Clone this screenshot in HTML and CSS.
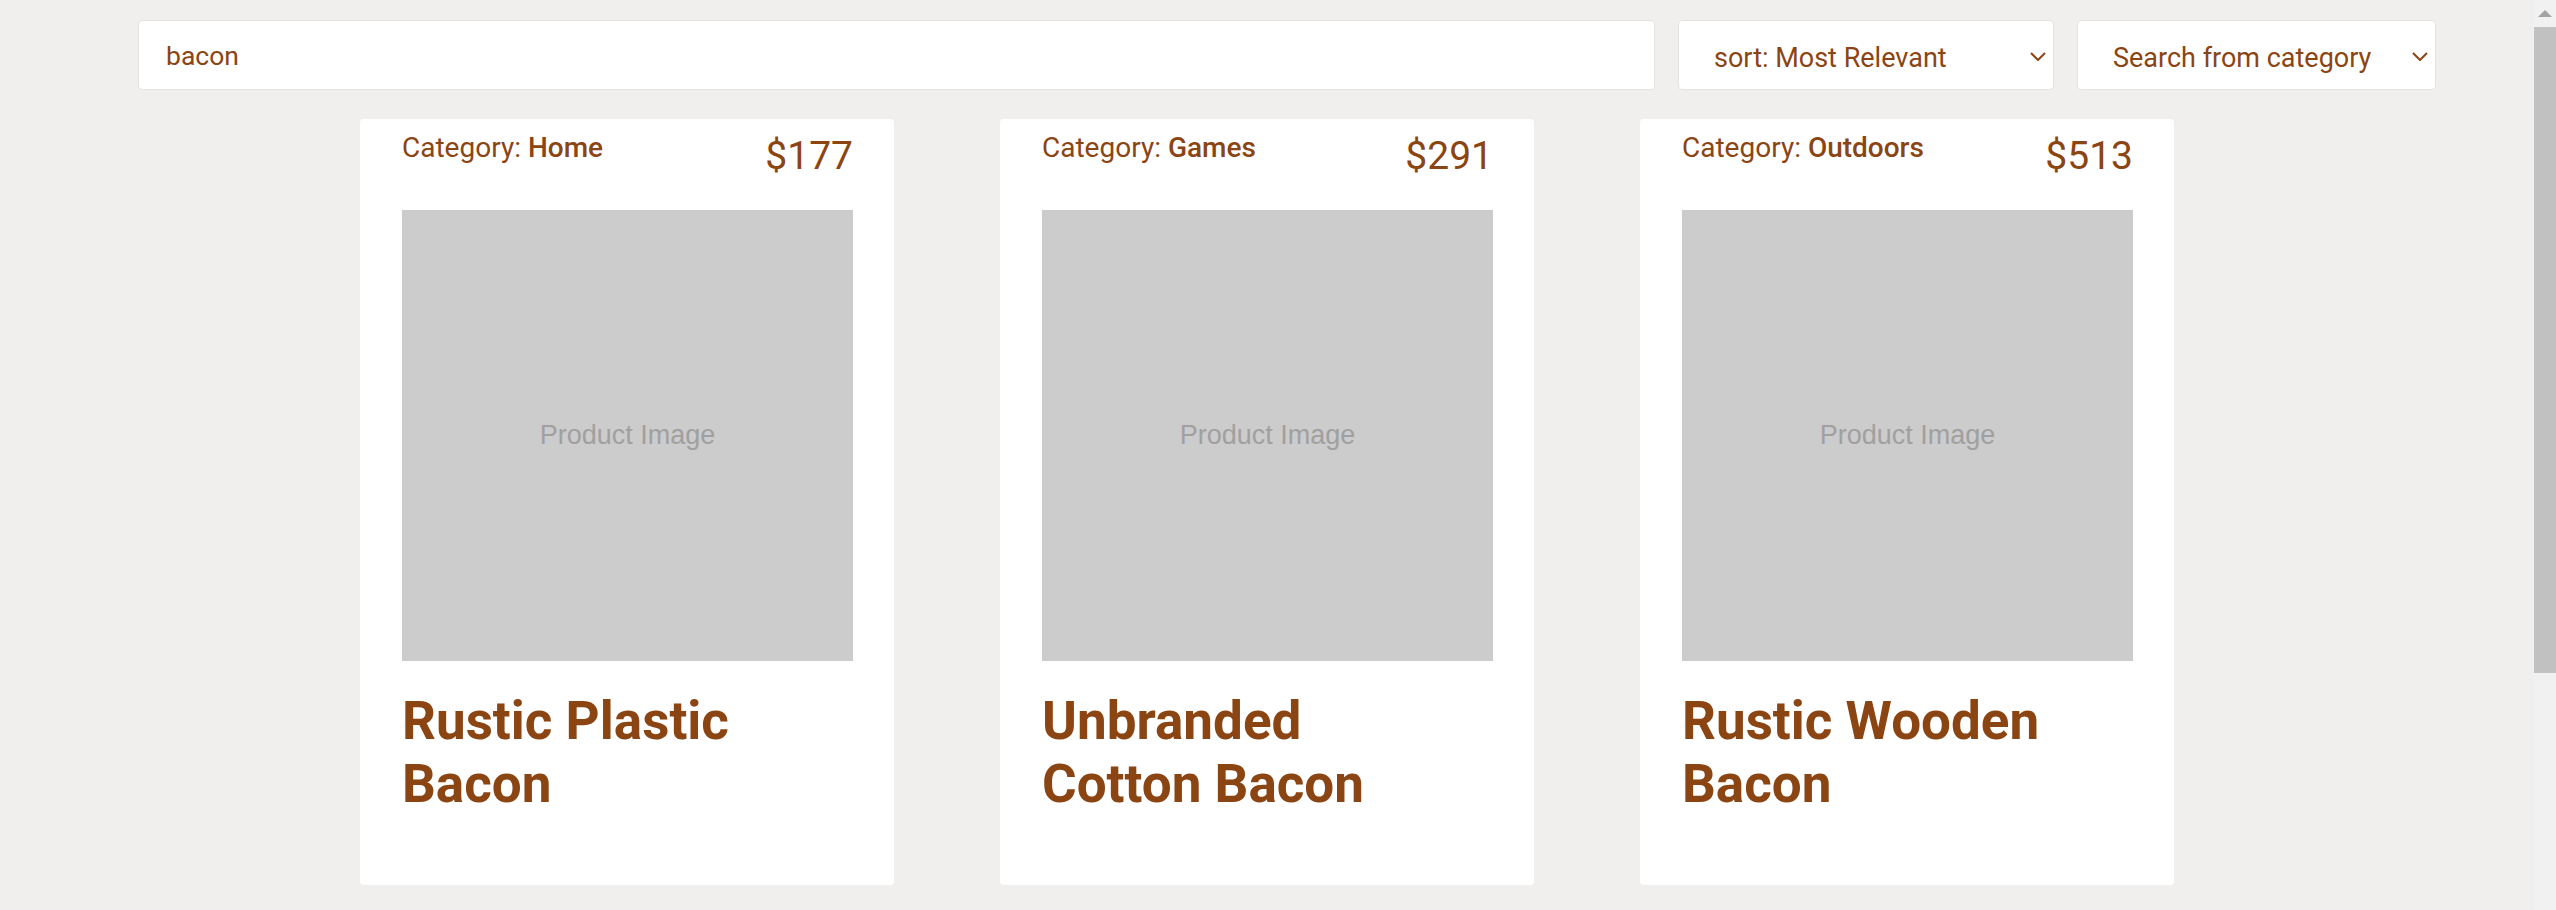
FILE: index.html
```html
<!DOCTYPE html>
<html lang="en">
<head>
<meta charset="utf-8">
<title>Products</title>
<link rel="stylesheet" href="styles.css">
</head>
<body>
<div class="page">
  <header class="toolbar">
    <input class="search" type="text" value="bacon">
    <button class="dropdown sort" type="button">
      <span>sort: Most Relevant</span>
      <svg class="chev" viewBox="0 0 16 9" width="16" height="9"><path d="M1 1 L8 8 L15 1"/></svg>
    </button>
    <button class="dropdown cat" type="button">
      <span>Search from category</span>
      <svg class="chev" viewBox="0 0 16 9" width="16" height="9"><path d="M1 1 L8 8 L15 1"/></svg>
    </button>
  </header>
  <main class="grid">
    <article class="card">
      <div class="card-head">
        <p class="category">Category: <b>Home</b></p>
        <p class="price">$177</p>
      </div>
      <div class="image">Product Image</div>
      <h2 class="title">Rustic Plastic Bacon</h2>
    </article>
    <article class="card">
      <div class="card-head">
        <p class="category">Category: <b>Games</b></p>
        <p class="price">$291</p>
      </div>
      <div class="image">Product Image</div>
      <h2 class="title">Unbranded Cotton Bacon</h2>
    </article>
    <article class="card">
      <div class="card-head">
        <p class="category">Category: <b>Outdoors</b></p>
        <p class="price">$513</p>
      </div>
      <div class="image">Product Image</div>
      <h2 class="title">Rustic Wooden Bacon</h2>
    </article>
  </main>
</div>
<div class="scrollbar" aria-hidden="true">
  <div class="sb-button">
    <svg width="14" height="7" viewBox="0 0 14 7"><path d="M0 7 L7 0 L14 7 Z"/></svg>
  </div>
  <div class="sb-thumb"></div>
</div>
</body>
</html>
```
FILE: styles.css
```css
html {
  background: #f0efee;
  overflow: hidden;
}
body {
  margin: 0;
  height: 910px;
  display: flex;
  overflow: hidden;
  background: #f0efee;
  color: #8b4513;
  font-family: Roboto, "Noto Sans", sans-serif;
}
.page {
  flex: 1;
  min-width: 0;
}

/* scrollbar column */
.scrollbar {
  width: 22px;
  flex: none;
  display: flex;
  flex-direction: column;
  background: #f1f1f1;
}
.sb-button {
  height: 27px;
  display: flex;
  justify-content: center;
  align-items: flex-start;
  padding-top: 10px;
  box-sizing: border-box;
}
.sb-button svg {
  fill: #a3a3a3;
}
.sb-thumb {
  height: 646px;
  background: #c1c1c1;
}

/* toolbar */
.toolbar {
  display: flex;
  gap: 23px;
  padding: 20px 98px 0 138px;
}
.search,
.dropdown {
  box-sizing: border-box;
  height: 70px;
  border: 1px solid #e3e3e3;
  border-radius: 4px;
  background: #fff;
  color: #8b4513;
  font: inherit;
  font-size: 27px;
  outline: none;
  margin: 0;
}
.search {
  flex: 1;
  min-width: 0;
  padding: 0 27px;
  font-size: 26.5px;
}
.dropdown {
  display: flex;
  align-items: center;
  justify-content: space-between;
  padding: 0 7px 0 35px;
  text-align: left;
  cursor: pointer;
}
.dropdown span {
  padding-top: 6px;
}
.dropdown.sort {
  width: 376px;
}
.dropdown.cat {
  width: 359px;
}
.chev {
  fill: none;
  stroke: #8b4513;
  stroke-width: 2;
  margin-top: 2px;
}

/* cards */
.grid {
  display: flex;
  justify-content: center;
  gap: 106px;
  margin-top: 29px;
}
.card {
  box-sizing: border-box;
  width: 534px;
  height: 766px;
  padding: 12px 41px 0 42px;
  background: #fff;
  border-radius: 4px;
}
.card-head {
  display: flex;
  justify-content: space-between;
  align-items: flex-start;
}
.category {
  margin: 0;
  font-size: 28px;
  line-height: 34px;
}
.category b {
  font-weight: 500;
}
.price {
  margin: 0;
  font-size: 39px;
  line-height: 50px;
}
.image {
  display: flex;
  align-items: center;
  justify-content: center;
  width: 451px;
  height: 451px;
  margin-top: 29px;
  background: #cccccc;
  color: #a0a0a0;
  font-family: "Liberation Sans", Arial, sans-serif;
  font-size: 27px;
}
.title {
  max-width: 400px;
  margin: 29px 0 0;
  font-size: 53px;
  line-height: 63px;
  font-weight: 700;
}
```
